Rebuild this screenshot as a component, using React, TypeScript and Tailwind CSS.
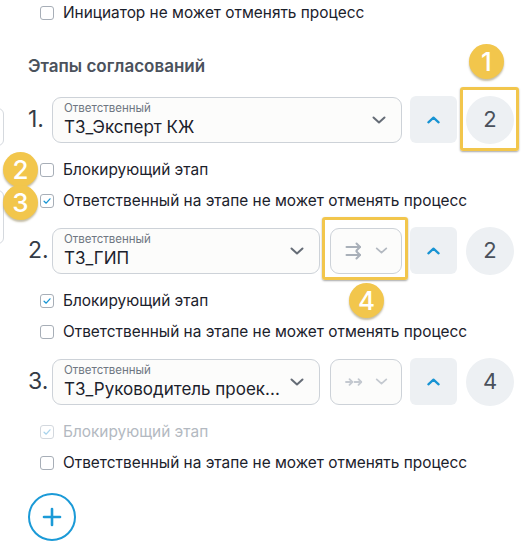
import React from "react";

function Check({ checked = false, disabled = false }: { checked?: boolean; disabled?: boolean }) {
  return (
    <span
      className={`flex size-[14px] shrink-0 items-center justify-center rounded-[3px] border bg-white ${
        disabled ? "border-[#d3d8de]" : "border-[#a7aeb7]"
      }`}
    >
      {checked && (
        <svg viewBox="0 0 12 12" className="size-[10px]" fill="none">
          <path
            d="M2.5 6.3 L5 8.6 L9.6 3.4"
            stroke={disabled ? "#a9d3ec" : "#1a96d4"}
            strokeWidth="1.6"
            strokeLinecap="round"
            strokeLinejoin="round"
          />
        </svg>
      )}
    </span>
  );
}

function CheckRow({ label, checked, disabled }: { label: string; checked?: boolean; disabled?: boolean }) {
  return (
    <div className="flex h-[20px] items-center gap-[9px] pl-[12px]">
      <Check checked={checked} disabled={disabled} />
      <span className={`text-[15.4px] leading-[20px] ${disabled ? "text-[#b3b9c1]" : "text-[#1b212b]"}`}>{label}</span>
    </div>
  );
}

function ChevronDown({ className }: { className: string }) {
  return (
    <svg viewBox="0 0 14 8" className={className} fill="none">
      <path d="M1.5 1.5 L7 6.5 L12.5 1.5" stroke="currentColor" strokeWidth="2" strokeLinecap="round" strokeLinejoin="round" />
    </svg>
  );
}

function Stage({
  n,
  value,
  count,
  route,
  blocking,
  blockingDisabled,
  noCancel,
}: {
  n: number;
  value: string;
  count: number;
  route?: "split" | "chain";
  blocking: boolean;
  blockingDisabled?: boolean;
  noCancel: boolean;
}) {
  return (
    <div>
      <div className="flex h-[47px] items-center">
        <span className="w-[24px] shrink-0 text-[23px] leading-none text-[#353c46]">{n}.</span>
        <div
          className={`flex h-[46px] shrink-0 items-center rounded-[9px] border border-[#cdd2d8] bg-[#fcfcfb] pl-[11px] pr-[15px] ${
            route ? "w-[268px]" : "w-[350px]"
          }`}
        >
          <div className="flex min-w-0 flex-1 flex-col pt-[1px]">
            <span className="text-[11.5px] leading-[13px] text-[#6f7782]">Ответственный</span>
            <span className="mt-[1px] whitespace-nowrap text-[17px] leading-[23px] text-[#1b212b]">{value}</span>
          </div>
          <ChevronDown className="ml-[8px] h-[8px] w-[14px] shrink-0 text-[#656c76]" />
        </div>
        {route && (
          <div className="ml-[10px] flex h-[46px] w-[72px] shrink-0 items-center justify-center gap-[12px] rounded-[9px] border border-[#cdd2d8] bg-[#fcfcfb]">
            {route === "split" ? (
              <svg viewBox="0 0 18 18" className="size-[18px]" fill="none" stroke="#a9b0b9" strokeWidth="2" strokeLinecap="round" strokeLinejoin="round">
                <path d="M1.5 5 H15" />
                <path d="M11.5 1.5 L15 5 L11.5 8.5" />
                <path d="M1.5 13 H15" />
                <path d="M11.5 9.5 L15 13 L11.5 16.5" />
              </svg>
            ) : (
              <svg viewBox="0 0 18 10" className="h-[10px] w-[18px]" fill="none" stroke="#c4c9d0" strokeWidth="1.8" strokeLinecap="round" strokeLinejoin="round">
                <path d="M1 5 H7" />
                <path d="M4.5 2.2 L7.3 5 L4.5 7.8" />
                <path d="M9.5 5 H16" />
                <path d="M13.5 2.2 L16.3 5 L13.5 7.8" />
              </svg>
            )}
            <ChevronDown className={`h-[7px] w-[13px] ${route === "split" ? "text-[#b3b9c1]" : "text-[#c4c9d0]"}`} />
          </div>
        )}
        <button className="ml-[8px] flex h-[47px] w-[47px] shrink-0 items-center justify-center rounded-[6px] bg-[#edf0f3]">
          <svg viewBox="0 0 14 8" className="h-[8px] w-[13px]" fill="none">
            <path d="M1.5 6.5 L7 1.5 L12.5 6.5" stroke="#1793d3" strokeWidth="2.4" strokeLinecap="round" strokeLinejoin="round" />
          </svg>
        </button>
        <div className="ml-[9px] flex size-[48px] shrink-0 items-center justify-center rounded-full bg-[#edf0f3] text-[22px] text-[#4a515b]">
          {count}
        </div>
      </div>
      <div className="mt-[17px] flex flex-col gap-[11px]">
        <CheckRow label="Блокирующий этап" checked={blocking} disabled={blockingDisabled} />
        <CheckRow label="Ответственный на этапе не может отменять процесс" checked={noCancel} />
      </div>
    </div>
  );
}

function Badge({ n, className }: { n: number; className: string }) {
  return (
    <div
      className={`absolute flex size-[35px] items-center justify-center rounded-full bg-[#f2c64c] text-[26px] font-medium leading-none text-white shadow-[0_2px_2px_rgba(90,70,0,0.35)] ${className}`}
    >
      {n}
    </div>
  );
}

export default function App() {
  return (
    <div
      className="relative h-[556px] w-[522px] overflow-hidden bg-white"
      style={{ fontFamily: "Inter, 'Noto Sans', sans-serif" }}
    >
      {/* edges of the cut-off column on the left */}
      <div className="absolute left-[-10px] top-[108px] h-[38px] w-[14px] rounded-r-[6px] border border-[#d5d9de]" />
      <div className="absolute left-[-10px] top-[190px] h-[54px] w-[14px] rounded-r-[6px] border border-[#d5d9de]" />

      <div className="pl-[28px] pr-[8px] pt-[3px]">
        <CheckRow label="Инициатор не может отменять процесс" />
        <h2 className="mt-[32px] text-[17px] font-semibold leading-[22px] text-[#4b525c]">Этапы согласований</h2>
        <div className="mt-[19px] flex flex-col gap-[16px]">
          <Stage n={1} value="ТЗ_Эксперт КЖ" count={2} blocking={false} noCancel />
          <Stage n={2} value="ТЗ_ГИП" count={2} route="split" blocking noCancel={false} />
          <Stage n={3} value="ТЗ_Руководитель проек..." count={4} route="chain" blocking blockingDisabled noCancel={false} />
        </div>
        <button className="mt-[20px] flex size-[48px] items-center justify-center rounded-full border-2 border-[#1b9ad7]">
          <svg viewBox="0 0 20 20" className="size-[20px]" fill="none" stroke="#1b9ad7" strokeWidth="2.6" strokeLinecap="round">
            <path d="M10 2 V18" />
            <path d="M2 10 H18" />
          </svg>
        </button>
      </div>

      {/* annotation overlays */}
      <div className="absolute left-[460px] top-[87px] h-[64px] w-[59px] rounded-[3px] border-[3px] border-[#f2c64c] shadow-[0_1px_2px_rgba(0,0,0,0.35)]" />
      <div className="absolute left-[322px] top-[217px] h-[63px] w-[86px] rounded-[3px] border-[3px] border-[#f2c64c] shadow-[0_1px_2px_rgba(0,0,0,0.35)]" />
      <Badge n={1} className="left-[469px] top-[44px]" />
      <Badge n={2} className="left-[3px] top-[152px]" />
      <Badge n={3} className="left-[3px] top-[185px]" />
      <Badge n={4} className="left-[349px] top-[283px]" />
    </div>
  );
}
